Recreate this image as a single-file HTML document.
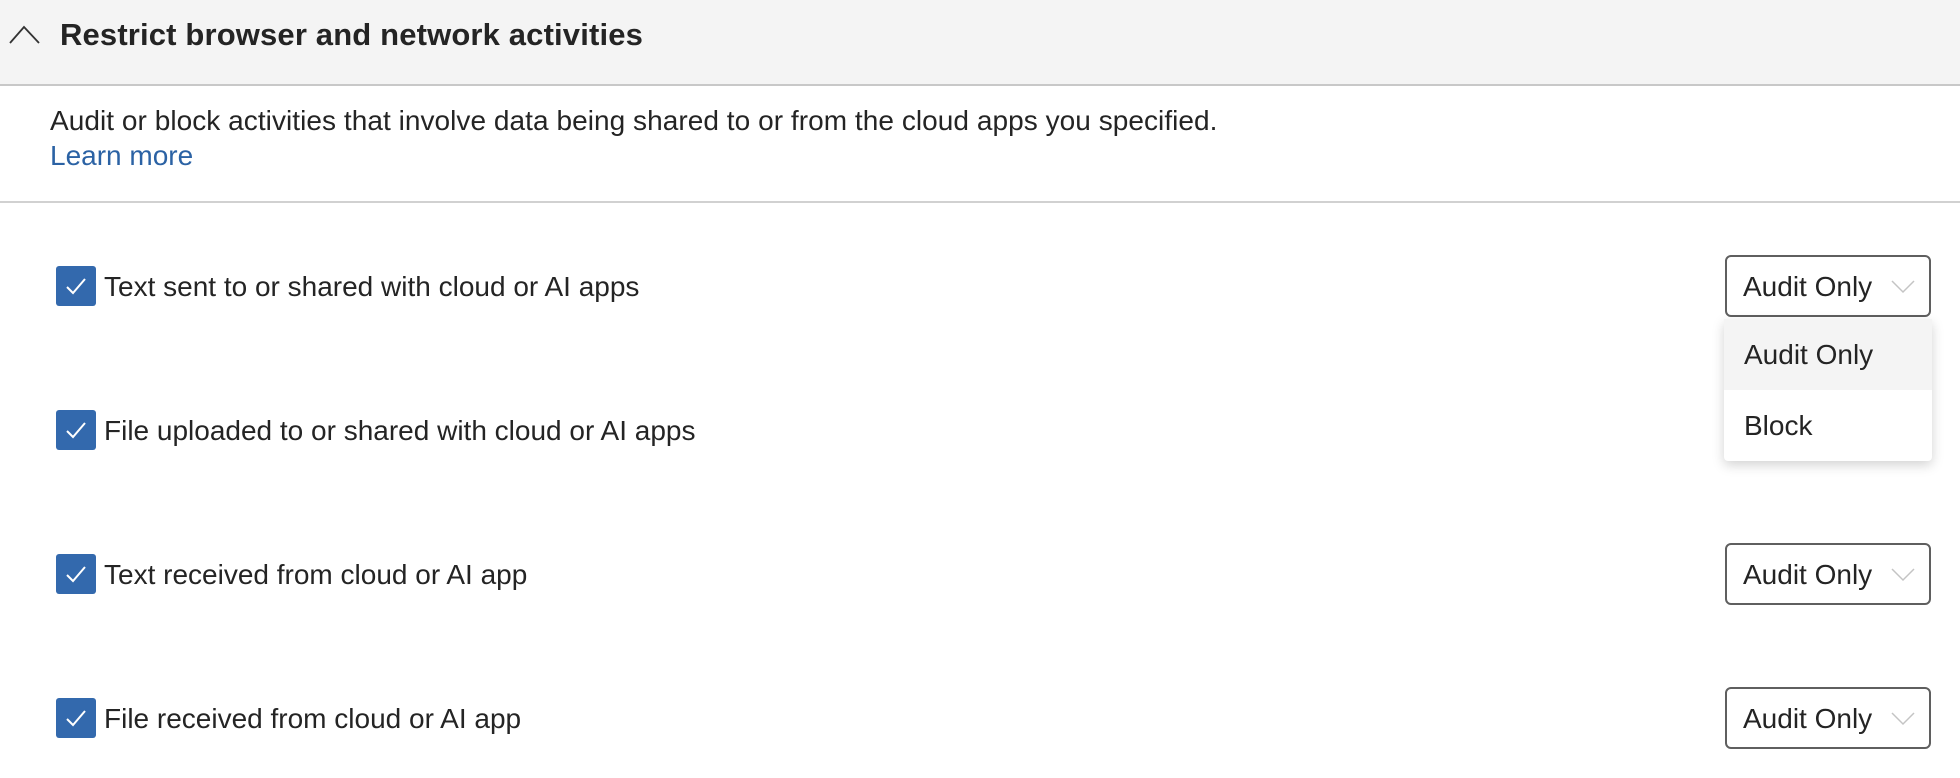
<!DOCTYPE html>
<html><head><meta charset="utf-8"><style>
*{margin:0;padding:0;box-sizing:border-box}
body{width:1960px;height:778px;background:#fff;font-family:"Liberation Sans",sans-serif;color:#242424;position:relative;overflow:hidden}
.hdr{position:absolute;left:0;top:0;width:1960px;height:86px;background:#f4f4f4;border-bottom:2px solid #c8c8c8}
.title{position:absolute;left:60px;top:17px;font-size:31px;font-weight:bold;letter-spacing:0.15px}
.desc{position:absolute;left:50px;top:105px;font-size:28px;letter-spacing:0.05px}
.learn{position:absolute;left:50px;top:140px;font-size:28px;color:#2b62a4}
.sep{position:absolute;left:0;top:201px;width:1960px;height:2px;background:#d1d1d1}
.cb{position:absolute;left:56px;width:40px;height:40px;background:#3369ad;border-radius:3px}
.lbl{position:absolute;left:104px;font-size:28px}
.dd{position:absolute;left:1725px;width:206px;height:62px;border:2px solid #5f5f5f;border-radius:6px;font-size:28px;padding:14px 0 0 16px}
.dd svg{position:absolute;right:14px;top:23px}
.menu{position:absolute;left:1724px;top:319px;width:208px;height:142px;background:#fff;border-radius:4px;box-shadow:0 4px 12px rgba(0,0,0,.18)}
.mi{height:71px;font-size:28px;padding:20px 0 0 20px}
</style></head><body>
<div class="hdr">
<svg style="position:absolute;left:9px;top:23px" width="32" height="22"><path d="M1 20 L15 4 L30 20" fill="none" stroke="#333" stroke-width="1.8"/></svg>
<div class="title">Restrict browser and network activities</div>
</div>
<div class="desc">Audit or block activities that involve data being shared to or from the cloud apps you specified.</div>
<div class="learn">Learn more</div>
<div class="sep"></div>

<div class="cb" style="top:266px"><svg width="40" height="40"><path d="M11 21 L17 27 L29 13" fill="none" stroke="#fff" stroke-width="2"/></svg></div>
<div class="lbl" style="top:271px">Text sent to or shared with cloud or AI apps</div>
<div class="cb" style="top:410px"><svg width="40" height="40"><path d="M11 21 L17 27 L29 13" fill="none" stroke="#fff" stroke-width="2"/></svg></div>
<div class="lbl" style="top:415px">File uploaded to or shared with cloud or AI apps</div>
<div class="cb" style="top:554px"><svg width="40" height="40"><path d="M11 21 L17 27 L29 13" fill="none" stroke="#fff" stroke-width="2"/></svg></div>
<div class="lbl" style="top:559px">Text received from cloud or AI app</div>
<div class="cb" style="top:698px"><svg width="40" height="40"><path d="M11 21 L17 27 L29 13" fill="none" stroke="#fff" stroke-width="2"/></svg></div>
<div class="lbl" style="top:703px">File received from cloud or AI app</div>

<div class="dd" style="top:255px">Audit Only<svg width="24" height="14"><path d="M1 1 L12 12 L23 1" fill="none" stroke="#c4c4c4" stroke-width="1.5"/></svg></div>
<div class="menu"><div class="mi" style="background:#f4f4f4">Audit Only</div><div class="mi">Block</div></div>
<div class="dd" style="top:543px">Audit Only<svg width="24" height="14"><path d="M1 1 L12 12 L23 1" fill="none" stroke="#c4c4c4" stroke-width="1.5"/></svg></div>
<div class="dd" style="top:687px">Audit Only<svg width="24" height="14"><path d="M1 1 L12 12 L23 1" fill="none" stroke="#c4c4c4" stroke-width="1.5"/></svg></div>
</body></html>
